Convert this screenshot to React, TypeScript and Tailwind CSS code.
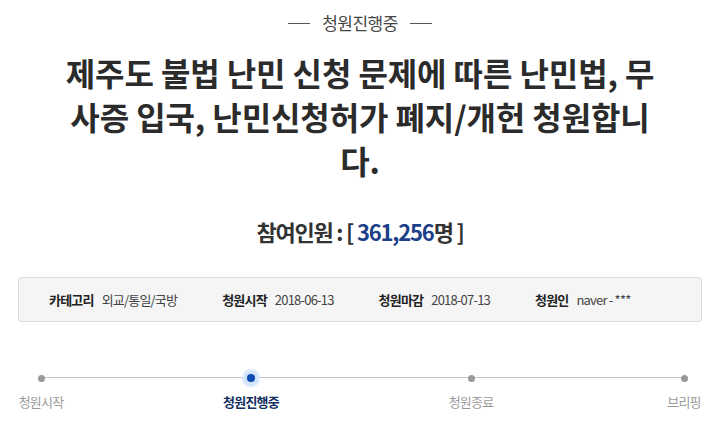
export default function App() {
  const steps = [
    { label: "청원시작", active: false, ml: "ml-0" },
    { label: "청원진행중", active: true, ml: "ml-[150px]" },
    { label: "청원종료", active: false, ml: "ml-[160px]" },
    { label: "브리핑", active: false, ml: "ml-[153px]" },
  ];

  return (
    <div className="w-[720px] h-[442px] bg-white overflow-hidden font-['Noto_Sans_CJK_KR',sans-serif] text-[#333]">
      {/* Status header */}
      <div className="pt-[11px] flex items-center justify-center gap-3">
        <span className="w-[22px] h-px bg-[#555]" />
        <span className="text-[17px] leading-6 tracking-[-0.5px] text-[#444]">청원진행중</span>
        <span className="w-[22px] h-px bg-[#555]" />
      </div>

      {/* Title */}
      <h1 className="mt-[15px] text-center text-[32px] leading-[44px] font-bold tracking-[-0.1px] text-[#2b2b2b]">
        제주도 불법 난민 신청 문제에 따른 난민법, 무<br />
        사증 입국, 난민신청허가 폐지/개헌 청원합니<br />
        다.
      </h1>

      {/* Participants */}
      <div className="mt-[34px] text-center text-[22px] leading-[30px] font-bold tracking-[-1.2px] text-[#333]">
        참여인원 : [ <span className="text-[#1b4089]">361,256</span>명 ]
      </div>

      {/* Info box */}
      <div className="mt-[31px] mx-[18px] h-[45px] border border-[#dcdcdc] rounded-[3px] bg-[#f5f5f5] flex items-center pl-[30px] gap-[45px] text-[13px] tracking-[-0.8px]">
        <div className="flex items-center gap-2">
          <span className="font-bold text-[#222]">카테고리</span>
          <span className="text-[#444]">외교/통일/국방</span>
        </div>
        <div className="flex items-center gap-2">
          <span className="font-bold text-[#222]">청원시작</span>
          <span className="text-[#444]">2018-06-13</span>
        </div>
        <div className="flex items-center gap-2">
          <span className="font-bold text-[#222]">청원마감</span>
          <span className="text-[#444]">2018-07-13</span>
        </div>
        <div className="flex items-center gap-2">
          <span className="font-bold text-[#222]">청원인</span>
          <span className="text-[#444]">naver - ***</span>
        </div>
      </div>

      {/* Progress */}
      <div className="relative mt-[48px] flex pl-[11px]">
        <div className="absolute left-[41px] w-[643px] top-[7px] h-px bg-[#c4c4c4]" />
        {steps.map((s) => (
          <div key={s.label} className={`${s.ml} w-[60px] flex flex-col items-center`}>
            <div className="relative h-4 w-5 flex items-center justify-center">
              {s.active ? (
                <span className="w-5 h-5 rounded-full bg-[radial-gradient(circle,#b9d7f7_0%,#d9e9fb_55%,rgba(255,255,255,0)_72%)] flex items-center justify-center">
                  <span className="w-2 h-2 rounded-full bg-[#0d4bb0]" />
                </span>
              ) : (
                <span className="w-[7px] h-[7px] rounded-full bg-[#9a9a9a]" />
              )}
            </div>
            <span
              className={`mt-[7px] text-[13px] leading-[18px] tracking-[-0.8px] whitespace-nowrap ${
                s.active ? "font-bold text-[#14305f]" : "text-[#9a9a9a]"
              }`}
            >
              {s.label}
            </span>
          </div>
        ))}
      </div>
    </div>
  );
}
